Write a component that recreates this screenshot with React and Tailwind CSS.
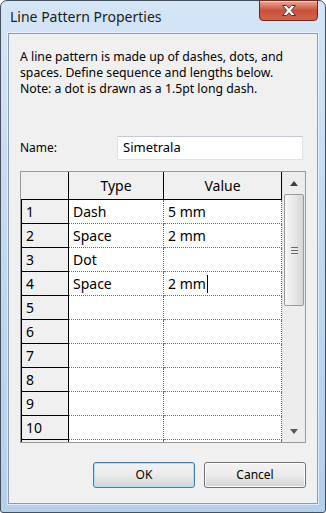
import React from 'react';

// Windows 7 style "Line Pattern Properties" dialog

const rows = [
  { n: '1', type: 'Dash', value: '5 mm' },
  { n: '2', type: 'Space', value: '2 mm' },
  { n: '3', type: 'Dot', value: '' },
  { n: '4', type: 'Space', value: '2 mm', caret: true },
  { n: '5', type: '', value: '' },
  { n: '6', type: '', value: '' },
  { n: '7', type: '', value: '' },
  { n: '8', type: '', value: '' },
  { n: '9', type: '', value: '' },
  { n: '10', type: '', value: '' },
  { n: '', type: '', value: '' }, // partly hidden row below 10
];

function CloseButton() {
  return (
    <div className="-mt-px flex h-[21px] w-[59px] items-center justify-center rounded-b-[4px] border border-[#6b2a1f] bg-gradient-to-b from-[#e9a797] via-[#c9503a] to-[#d2654a] shadow-[inset_0_1px_0_rgba(255,255,255,0.45)]">
      <svg width="16" height="13" viewBox="0 0 16 13">
        <path
          d="M1.5 1.5 L5.5 1.5 L8 4.3 L10.5 1.5 L14.5 1.5 L10.2 6.5 L14.5 11.5 L10.5 11.5 L8 8.7 L5.5 11.5 L1.5 11.5 L5.8 6.5 Z"
          fill="#ffffff"
          stroke="#3a3a3a"
          strokeWidth="1"
          strokeLinejoin="round"
        />
      </svg>
    </div>
  );
}

function Button({ children, focused }) {
  return (
    <button
      className={`h-[26px] w-[102px] rounded-[3px] border bg-gradient-to-b from-[#f3f3f3] via-[#ebebeb] to-[#d4d4d4] text-[12px] text-black ${
        focused
          ? 'border-[#3c7fb1] shadow-[inset_0_0_0_1px_#a6e3fb]'
          : 'border-[#707070] shadow-[inset_0_0_0_1px_#fcfcfc]'
      }`}
    >
      {children}
    </button>
  );
}

function Scrollbar() {
  return (
    <div className="flex w-[23px] flex-col border-l border-[#e3e3e3] bg-[#ededed]">
      <div className="flex h-[22px] items-center justify-center">
        <svg width="8" height="5" viewBox="0 0 8 5">
          <path d="M4 0 L8 5 L0 5 Z" fill="#3f3f3f" />
        </svg>
      </div>
      <div className="mx-px flex h-[112px] items-center justify-center rounded-[2px] border border-[#9b9b9b] bg-gradient-to-r from-[#f6f6f6] via-[#e8e8e8] to-[#d6d6d6]">
        <div className="flex flex-col gap-[2px]">
          <div className="h-px w-[7px] bg-[#6b6b6b]" />
          <div className="h-px w-[7px] bg-[#6b6b6b]" />
          <div className="h-px w-[7px] bg-[#6b6b6b]" />
        </div>
      </div>
      <div className="flex-1" />
      <div className="flex h-[22px] items-center justify-center">
        <svg width="8" height="5" viewBox="0 0 8 5">
          <path d="M0 0 L8 0 L4 5 Z" fill="#5a5a5a" />
        </svg>
      </div>
    </div>
  );
}

function PatternGrid() {
  return (
    <div className="mt-[11px] ml-[11px] flex h-[272px] w-[286px] border border-[#9a9a9a] bg-white">
      <div className="h-full w-[261px] overflow-hidden text-[14px] text-black">
        {/* Header */}
        <div className="flex h-[28px] border-b border-black bg-[#f0f0f0]">
          <div className="w-[48px] border-r border-black" />
          <div className="flex w-[95px] items-center justify-center border-r border-black">Type</div>
          <div className="flex w-[118px] items-center justify-center border-r border-black">Value</div>
        </div>
        {rows.map((row, i) => (
          <div key={i} className="flex h-[24px]">
            <div className="flex w-[48px] items-center border-r border-b border-l border-black bg-[#f0f0f0] pl-[4px]">
              {row.n}
            </div>
            <div className="flex w-[95px] items-center border-r border-b border-dotted border-[#6a6a6a] pl-[4px]">
              {row.type}
            </div>
            <div className="flex w-[118px] items-center border-r border-b border-dotted border-[#6a6a6a] pl-[4px]">
              {row.value}
              {row.caret && <span className="ml-px h-[18px] border-l border-black" />}
            </div>
          </div>
        ))}
      </div>
      <Scrollbar />
    </div>
  );
}

export default function App() {
  return (
    <div className="h-[513px] w-[326px] bg-white font-['Noto_Sans',sans-serif]">
      <div className="flex h-full flex-col rounded-t-[7px] rounded-b-[3px] border border-[#44505e] bg-gradient-to-b from-[#d4e5f6] via-[#c2d8f0] to-[#b5cfeb]">
        {/* Title bar */}
        <div className="flex h-[32px] items-start justify-between pl-[9px] pr-[7px]">
          <span className="mt-[6px] text-[14px] leading-[20px] text-[#1b1b1b]">Line Pattern Properties</span>
          <CloseButton />
        </div>

        {/* Client area */}
        <div className="mx-[7px] flex flex-1 flex-col border border-[#8a9db3] bg-[#f0f0f0] shadow-[0_0_0_1px_rgba(255,255,255,0.55)]">
          <p className="mt-[15px] pl-[11px] text-[12.25px] leading-[16px] text-black">
            A line pattern is made up of dashes, dots, and
            <br />
            spaces. Define sequence and lengths below.
            <br />
            Note: a dot is drawn as a 1.5pt long dash.
          </p>

          <div className="mt-[39px] flex items-center pl-[11px]">
            <span className="w-[97px] text-[12px] text-black">Name:</span>
            <div className="flex h-[24px] w-[186px] items-center border border-[#dfe3e8] border-t-[#c5cad2] bg-white pl-[5px] text-[13px] text-black">
              Simetrala
            </div>
          </div>

          <PatternGrid />

          <div className="mt-[19px] flex justify-end gap-[9px] pr-[11px]">
            <Button focused>OK</Button>
            <Button>Cancel</Button>
          </div>
        </div>

        <div className="h-[8px]" />
      </div>
    </div>
  );
}
